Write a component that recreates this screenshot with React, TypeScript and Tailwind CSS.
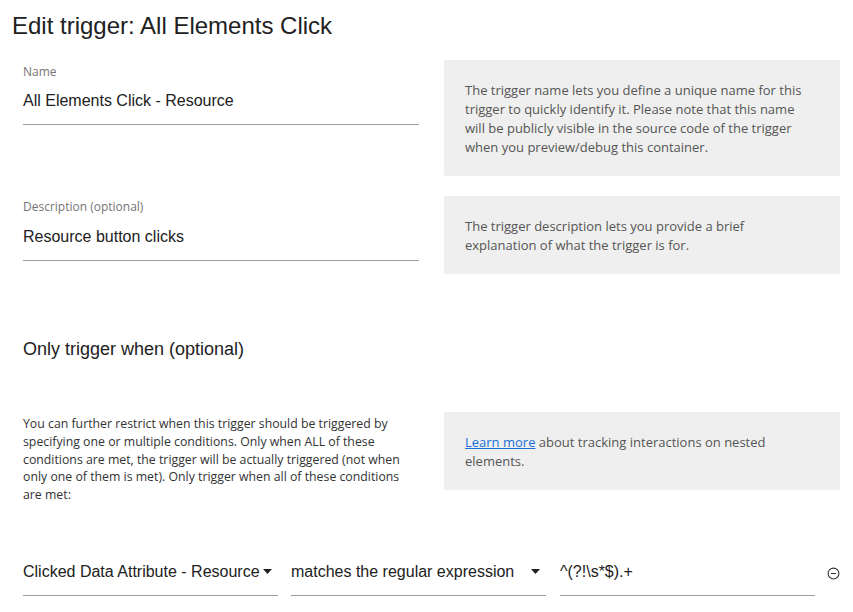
import { CircleMinus } from "lucide-react";

const font = { fontFamily: '"Liberation Sans", Arial, sans-serif' };
const small = { fontFamily: '"Open Sans", "Noto Sans", sans-serif' };

interface FieldProps {
  label: string;
  value: string;
  labelGap: string;
}

const TextField = ({ label, value, labelGap }: FieldProps) => (
  <div className="w-[396px] shrink-0">
    <div className="text-[12px] leading-[16px] text-[#757575]" style={small}>
      {label}
    </div>
    <div className={`${labelGap} border-b border-[#9e9e9e] pb-[11px] text-[16px] leading-[24px] text-[#212121]`}>
      {value}
    </div>
  </div>
);

const InfoBox = ({ children }: { children: React.ReactNode }) => (
  <div
    className="w-[396px] shrink-0 rounded-[2px] bg-[#efefef] pt-[21px] pb-[19px] pl-[21px] pr-[25px] text-[13px] leading-[19px] text-[#555555]"
    style={small}
  >
    {children}
  </div>
);

const Caret = () => (
  <svg width="9" height="5" viewBox="0 0 9 5" className="shrink-0">
    <path d="M0 0h9L4.5 5z" fill="#212121" />
  </svg>
);

const SelectField = ({ value }: { value: string }) => (
  <div className="flex w-[255px] shrink-0 items-center justify-between gap-[3px] border-b border-[#9e9e9e] pb-[11px] pr-[6px] text-[16px] leading-[24px] text-[#212121]">
    <span className="whitespace-nowrap">{value}</span>
    <Caret />
  </div>
);

export default function App() {
  return (
    <div className="min-h-screen w-[853px] bg-white" style={font}>
      <h1 className="pl-[12px] pt-[11px] text-[24px] leading-[30px] text-[#212121]">
        Edit trigger: All Elements Click
      </h1>

      <div className="mt-[19px] flex items-start gap-[25px] pl-[23px]">
        <div className="pt-[4px]">
          <TextField label="Name" value="All Elements Click - Resource" labelGap="mt-[9px]" />
        </div>
        <InfoBox>
          The trigger name lets you define a unique name for this trigger to quickly identify it.
          Please note that this name will be publicly visible in the source code of the trigger when
          you preview/debug this container.
        </InfoBox>
      </div>

      <div className="mt-[20px] flex items-start gap-[25px] pl-[23px]">
        <div className="pt-[3px]">
          <TextField label="Description (optional)" value="Resource button clicks" labelGap="mt-[10px]" />
        </div>
        <InfoBox>
          The trigger description lets you provide a brief explanation of what the trigger is for.
        </InfoBox>
      </div>

      <h2 className="mt-[62px] pl-[23px] text-[18px] leading-[26px] text-[#212121]">
        Only trigger when (optional)
      </h2>

      <div className="mt-[50px] flex items-start gap-[25px] pl-[23px]">
        <p className="mt-[3px] w-[396px] shrink-0 text-[12.3px] leading-[17.8px] text-[#333333]" style={small}>
          You can further restrict when this trigger should be triggered by specifying one or
          multiple conditions. Only when ALL of these conditions are met, the trigger will be actually
          triggered (not when only one of them is met). Only trigger when all of these conditions are
          met:
        </p>
        <InfoBox>
          <a href="#" className="text-[#1a6fd8] underline">
            Learn more
          </a>{" "}
          about tracking interactions on nested elements.
        </InfoBox>
      </div>

      <div className="mt-[56px] flex items-start pl-[23px]">
        <SelectField value="Clicked Data Attribute - Resource" />
        <div className="w-[13px]" />
        <SelectField value="matches the regular expression" />
        <div className="w-[14px]" />
        <div className="w-[255px] shrink-0 border-b border-[#9e9e9e] pb-[11px] text-[16px] leading-[24px] text-[#212121]">
          ^(?!\s*$).+
        </div>
        <CircleMinus size={13} strokeWidth={2} className="ml-[12px] mt-[7px] shrink-0 text-[#333333]" />
      </div>
    </div>
  );
}
